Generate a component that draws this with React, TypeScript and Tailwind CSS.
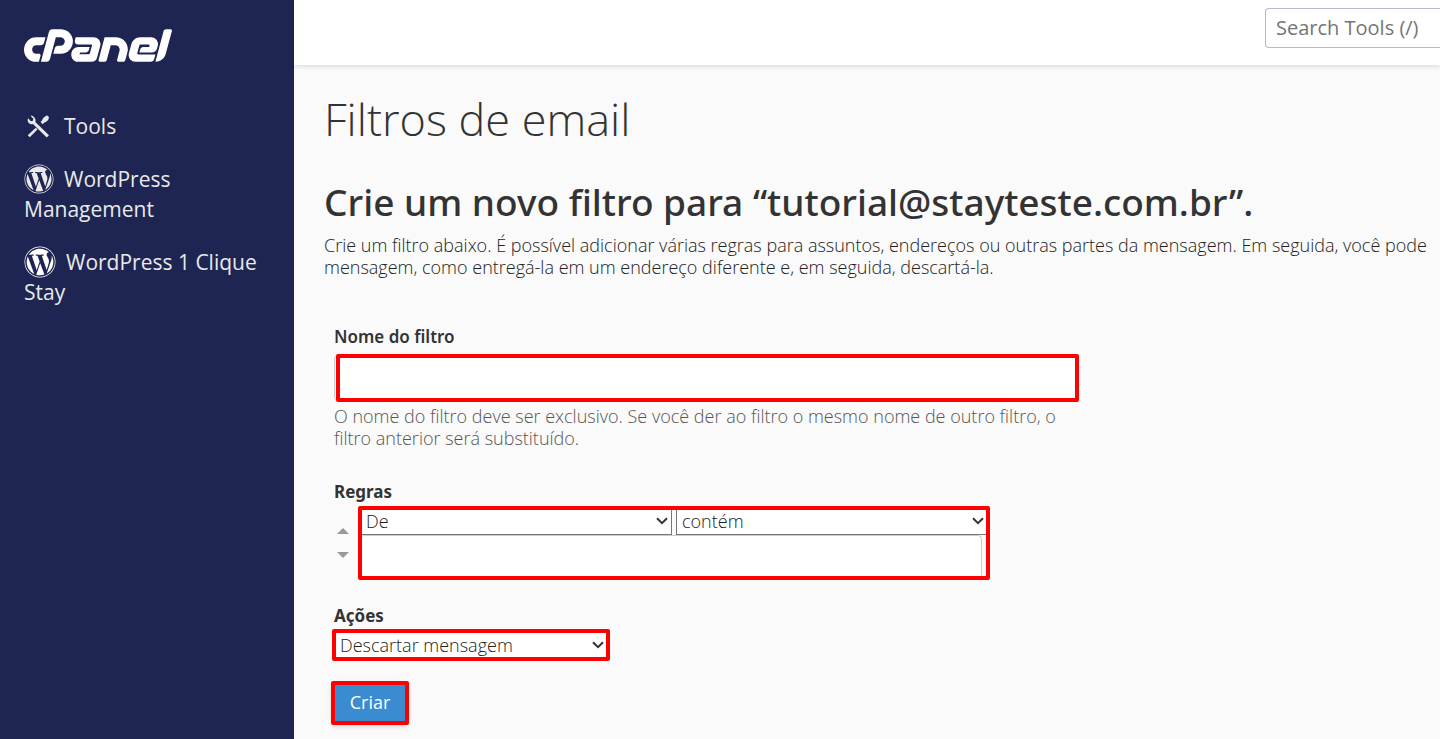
import React from 'react';
import { FaCpanel, FaWordpress } from 'react-icons/fa';

const ToolsIcon: React.FC = () => (
  <svg viewBox="0 0 24 24" className="-mb-1.5 -mt-2.5 ml-[3px] mr-3.5 inline-block h-[23px] w-[23px] align-middle" aria-hidden="true">
    <path
      fill="currentColor"
      d="M3.600.9 6.600 3.800 6.200 6 4 6.400 1.100 3.500C.3 5.600.7 7.100 1.900 8.300c1.200 1.200 2.800 1.500 4.300 1L20.600 23.400l2.300-2.200L8.700 7.200c.5-1.600.2-3.300-1-4.500C6.600 1.200 5.100.5 3.600.9Z"
    />
    <path fill="currentColor" d="M20.300.7c1.200-.4 2.800 1.200 2.500 2.600-.6 2-2.500 3.900-4.700 4.600l-1.700 1.700-2.300-2.300 1.700-1.700C16.500 3.200 18.300 1.400 20.300.7Z" />
    <path fill="currentColor" d="m9.200 13.300 1.700 1.700L2.900 23.300.8 21.200Z" />
  </svg>
);

interface MarkProps {
  className: string;
}

const Mark: React.FC<MarkProps> = ({ className }) => (
  <span
    aria-hidden="true"
    className={`pointer-events-none absolute rounded-xs border-4 border-[#ff0000] ${className}`}
  />
);

interface SelectProps {
  id: string;
  label: string;
  options: string[];
}

const Select: React.FC<SelectProps> = ({ id, label, options }) => (
  <div className="relative flex-1">
    <select
      id={id}
      aria-label={label}
      className="block h-7 w-full appearance-none border border-[#767676] bg-white pl-[5px] pr-6 text-[18px] font-light leading-6 text-[#222222]"
    >
      {options.map((option) => (
        <option key={option}>{option}</option>
      ))}
    </select>
    <svg
      viewBox="0 0 12 8"
      className="pointer-events-none absolute right-1 top-2.5 h-2 w-3"
      fill="none"
      stroke="#333333"
      strokeWidth="2"
      aria-hidden="true"
    >
      <path d="m1 1.200 5 5 5-5" />
    </svg>
  </div>
);

const Sidebar: React.FC = () => (
  <aside className="w-[294px] shrink-0 bg-[#1f2552] px-6 pt-[29px] text-[#e9e9ea]">
    <a href="#home" aria-label="cPanel" className="block w-[148px] text-white">
      <FaCpanel viewBox="0 179 640 141" className="h-[33px] w-[148px]" />
    </a>
    <nav className="mt-[49px] flex flex-col gap-[23px] text-[21px] leading-[30px]">
      <a href="#tools">
        <ToolsIcon />
        Tools
      </a>
      <a href="#wordpress">
        <FaWordpress className="-mb-1.5 -mt-2.5 mr-2.5 inline-block h-[30px] w-[30px] align-middle" />
        WordPress Management
      </a>
      <a href="#clique">
        <FaWordpress className="-mb-1.5 -mt-2.5 mr-2.5 inline-block h-8 w-8 align-middle text-white" />
        WordPress 1 Clique Stay
      </a>
    </nav>
  </aside>
);

export default function App() {
  return (
    <div className="flex min-h-screen overflow-hidden bg-[#fafafa] font-['Open_Sans',sans-serif] text-[#333333]">
      <Sidebar />
      <div className="min-w-0 flex-1">
        <header className="flex h-[65px] justify-end bg-white pt-2 shadow-[0_1px_5px_rgba(0,0,0,0.15)]">
          <input
            type="search"
            aria-label="Search Tools"
            placeholder="Search Tools (/)"
            className="h-10 w-[175px] rounded-l border border-r-0 border-[#b9b5cc] bg-white pb-0.5 pl-2.5 text-[20px] placeholder:text-[#757575]"
          />
        </header>

        <main className="pl-[30px] pt-6">
          <h1 className="text-[45px] font-light leading-[60px]">Filtros de email</h1>
          <h2 className="mt-7 font-['Noto_Sans',sans-serif] text-[37px] font-medium leading-[50px]">
            Crie um novo filtro para “tutorial@stayteste.com.br”.
          </h2>
          <p className="mt-[7px] text-[18px] font-light leading-[22px] text-[#222222]">
            Crie um filtro abaixo. É possível adicionar várias regras para assuntos, endereços ou outras partes da
            mensagem. Em seguida, você pode mensagem, como entregá-la em um endereço diferente e, em seguida,
            descartá-la.
          </p>

          <form className="mt-12 pl-2.5 text-[17px] leading-[22px]" onSubmit={(e) => e.preventDefault()}>
            <div className="w-[745px]">
              <label htmlFor="filter-name" className="block font-['Noto_Sans',sans-serif] font-semibold">
                Nome do filtro
              </label>
              <div className="relative mt-[7px]">
                <input
                  id="filter-name"
                  type="text"
                  className="block h-[46px] w-full rounded border border-[#cccccc] bg-white px-3"
                />
                <Mark className="-inset-y-px left-0.5 right-0" />
              </div>
              <p className="mt-1 text-[18px] font-light text-[#555555]">
                O nome do filtro deve ser exclusivo. Se você der ao filtro o mesmo nome de outro filtro, o filtro
                anterior será substituído.
              </p>
            </div>

            <div className="mt-8">
              <h3 className="font-['Noto_Sans',sans-serif] font-bold">Regras</h3>
              <div className="mt-1 flex gap-2">
                <div className="flex w-[18px] flex-col items-center justify-center gap-[18px]">
                  <button type="button" aria-label="Mover para cima" className="text-[#999999]">
                    <svg viewBox="0 0 12 6" className="block h-1.5 w-3" fill="currentColor">
                      <path d="M0 6 6 0l6 6Z" />
                    </svg>
                  </button>
                  <button type="button" aria-label="Mover para baixo" className="text-[#999999]">
                    <svg viewBox="0 0 12 6" className="block h-1.5 w-3" fill="currentColor">
                      <path d="M0 0h12L6 6Z" />
                    </svg>
                  </button>
                </div>
                <div className="relative w-[628px]">
                  <div className="flex gap-1">
                    <Select id="rule-part" label="Campo" options={['De', 'Assunto', 'Para']} />
                    <Select id="rule-match" label="Condição" options={['contém', 'é igual a']} />
                  </div>
                  <input
                    type="text"
                    aria-label="Valor da regra"
                    className="block h-11 w-[622px] rounded border border-[#cccccc] bg-white px-3"
                  />
                  <Mark className="-inset-x-0.5 -inset-y-px" />
                </div>
              </div>
            </div>

            <div className="mt-[26px]">
              <label htmlFor="action" className="block font-['Noto_Sans',sans-serif] font-bold">
                Ações
              </label>
              <div className="relative mt-1 flex w-[274px]">
                <Select id="action" label="Ações" options={['Descartar mensagem', 'Redirecionar para email']} />
                <Mark className="-inset-0.5" />
              </div>
            </div>

            <div className="relative -ml-px mt-6 w-[74px]">
              <button
                type="submit"
                className="block h-10 w-full bg-[#3a8bd0] pb-0.5 text-[18px] text-white shadow-[0_2px_6px_rgba(0,0,0,0.25)]"
              >
                Criar
              </button>
              <Mark className="-inset-0.5" />
            </div>
          </form>
        </main>
      </div>
    </div>
  );
}
